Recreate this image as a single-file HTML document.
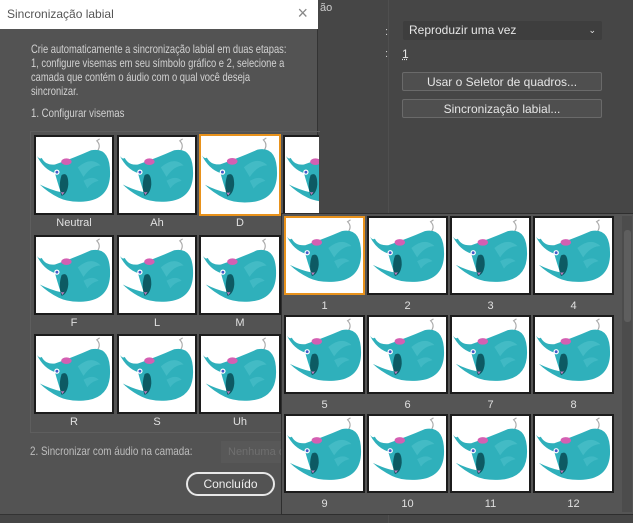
<!DOCTYPE html>
<html><head><meta charset="utf-8"><style>
*{box-sizing:border-box;margin:0;padding:0}
body{width:633px;height:523px;background:#464646;font-family:"Liberation Sans",sans-serif;font-size:11px;color:#d6d6d6;position:relative;overflow:hidden}
.abs{position:absolute}
.tile{position:absolute;background:#fff;border:2px solid #1c1c1c;overflow:hidden}
.tile.sel{border-color:#e8921c}
.tile svg{width:100%;height:100%;display:block}
.lbl{position:absolute;text-align:center;color:#e0e0e0;font-size:11px}
.btn{position:absolute;border:1px solid #6a6a6a;background:#4f4f4f;border-radius:2px;text-align:center;color:#e6e6e6;font-size:12px;line-height:18px}
.sx{transform-origin:0 0;transform:scaleX(.8);white-space:nowrap;font-size:12px}
</style></head><body>
<svg width="0" height="0" style="position:absolute">
<defs>
<g id="w">
<path d="M62 18 Q70 10 64 4 L67 2" stroke="#aaa" stroke-width="1.2" fill="none"/>
<path d="M1 20 Q4 24 6 22 Q10 30 20 29 Q40 22 58 14 Q78 10 78 38 Q78 66 50 68 Q34 69 24 64 Q12 58 4 50 Q16 56 26 58 Q22 46 20 38 Q8 34 1 20 Z" fill="#2fb0bb"/>
<path d="M44 32 Q58 20 68 30 Q58 30 50 42 Z" fill="#4cc0c9" opacity=".7"/>
<path d="M50 46 Q60 40 66 46 Q58 48 54 54 Z" fill="#4cc0c9" opacity=".6"/>
<ellipse cx="32" cy="26" rx="5.5" ry="3.5" fill="#d45fb2"/>
<path d="M27 40 Q34 36 34 50 Q33 60 27 62 Q23 52 27 40 Z" fill="#0d5a63"/>
<path d="M26 58 Q30 59 31 56 L28 61Z" fill="#c57cc0"/>
<circle cx="22" cy="37" r="2.8" fill="#fff"/><circle cx="22" cy="37" r="1.5" fill="#4658c8"/>
</g>
</defs></svg>

<div class="abs" style="left:388px;top:0;width:1px;height:523px;background:#4f4f4f"></div>
<div class="abs" style="left:320px;top:2px;color:#ccc">ão</div>
<div class="abs" style="left:385px;top:26px;color:#ccc">:</div>
<div class="abs" style="left:385px;top:48px;color:#ccc">:</div>
<div class="abs" style="left:403px;top:21px;width:199px;height:19px;background:#3e3e3e;border-radius:2px;color:#e6e6e6;font-size:12px;line-height:19px;padding-left:6px">Reproduzir uma vez<span style="position:absolute;right:6px;top:0;font-size:9px">&#8964;</span></div>
<div class="abs" style="left:402px;top:47px;color:#e6e6e6;font-size:12px;text-decoration:underline dotted">1</div>
<div class="btn" style="left:402px;top:72px;width:200px;height:19px">Usar o Seletor de quadros...</div>
<div class="btn" style="left:402px;top:99px;width:200px;height:19px">Sincronização labial...</div>

<div class="abs" style="left:0;top:0;width:318px;height:515px;background:#535353;border-right:1px solid #333;border-bottom:1px solid #333"></div>
<div class="abs" style="left:0;top:0;width:318px;height:29px;background:#fff;color:#555;font-size:12px;line-height:29px;padding-left:7px">Sincronização labial<span style="position:absolute;right:10px;top:-1px;font-size:18px;color:#888">&#215;</span></div>
<div class="abs" style="left:31px;top:42px;line-height:14px;color:#d2d2d2;font-size:12px;transform-origin:0 0;transform:scaleX(.78)">
<div style="white-space:nowrap">Crie automaticamente a sincronização labial em duas etapas:</div>
<div style="white-space:nowrap">1, configure visemas em seu símbolo gráfico e 2, selecione a</div>
<div style="white-space:nowrap">camada que contém o áudio com o qual você deseja</div>
<div style="white-space:nowrap">sincronizar.</div></div>
<div class="abs sx" style="left:31px;top:106px;color:#d2d2d2">1. Configurar visemas</div>
<div class="abs" style="left:30px;top:131px;width:290px;height:302px;border:1px solid #5e5e5e;border-right:none"></div>

<div class="tile" style="left:34px;top:135px;width:80px;height:80px"><svg viewBox="0 0 80 80"><use href="#w"/></svg></div>
<div class="tile" style="left:117px;top:135px;width:80px;height:80px"><svg viewBox="0 0 80 80"><use href="#w"/></svg></div>
<div class="tile sel" style="left:199px;top:134px;width:82px;height:82px"><svg viewBox="0 0 80 80"><use href="#w"/></svg></div>
<div class="tile" style="left:283px;top:135px;width:36px;height:80px;border-right:none"><svg viewBox="0 0 36 80" preserveAspectRatio="xMinYMid slice"><use href="#w"/></svg></div>
<div class="lbl" style="left:34px;top:217px;width:80px">Neutral</div>
<div class="lbl" style="left:117px;top:217px;width:80px">Ah</div>
<div class="lbl" style="left:199px;top:217px;width:82px">D</div>

<div class="tile" style="left:34px;top:235px;width:80px;height:80px"><svg viewBox="0 0 80 80"><use href="#w"/></svg></div>
<div class="tile" style="left:117px;top:235px;width:80px;height:80px"><svg viewBox="0 0 80 80"><use href="#w"/></svg></div>
<div class="tile" style="left:199px;top:235px;width:82px;height:80px"><svg viewBox="0 0 80 80"><use href="#w"/></svg></div>
<div class="lbl" style="left:34px;top:317px;width:80px">F</div>
<div class="lbl" style="left:117px;top:317px;width:80px">L</div>
<div class="lbl" style="left:199px;top:317px;width:82px">M</div>

<div class="tile" style="left:34px;top:334px;width:80px;height:80px"><svg viewBox="0 0 80 80"><use href="#w"/></svg></div>
<div class="tile" style="left:117px;top:334px;width:80px;height:80px"><svg viewBox="0 0 80 80"><use href="#w"/></svg></div>
<div class="tile" style="left:199px;top:334px;width:82px;height:80px"><svg viewBox="0 0 80 80"><use href="#w"/></svg></div>
<div class="lbl" style="left:34px;top:416px;width:80px">R</div>
<div class="lbl" style="left:117px;top:416px;width:80px">S</div>
<div class="lbl" style="left:199px;top:416px;width:82px">Uh</div>

<div class="abs sx" style="left:30px;top:444px;color:#bdbdbd;transform:scaleX(.82)">2. Sincronizar com áudio na camada:</div>
<div class="abs" style="left:221px;top:441px;width:70px;height:22px;background:#585858;color:#6f6f6f;line-height:22px;padding-left:7px">Nenhuma c</div>
<div class="abs" style="left:186px;top:472px;width:89px;height:24px;border:2px solid #e8e8e8;border-radius:12px;color:#eee;text-align:center;line-height:20px;font-size:12px">Concluído</div>

<div class="abs" style="left:281px;top:213px;width:352px;height:302px;background:#555;border:1px solid #2e2e2e;border-right:none"></div>
<div class="abs" style="left:622px;top:216px;width:10px;height:296px;background:#4c4c4c"></div>
<div class="abs" style="left:624px;top:230px;width:7px;height:92px;background:#5e5e5e;border-radius:3px"></div>
<div id="pop"></div>
<script>
var h='',n=1,xs=[284,367,450,533],ys=[216,315,414];
for(var r=0;r<3;r++)for(var c=0;c<4;c++){
var s=(n==1)?' sel':'';
h+='<div class="tile'+s+'" style="left:'+xs[c]+'px;top:'+ys[r]+'px;width:81px;height:79px"><svg viewBox="0 0 80 80" preserveAspectRatio="none"><use href="#w"/></svg></div>';
h+='<div class="lbl" style="left:'+xs[c]+'px;top:'+(ys[r]+84)+'px;width:81px">'+n+'</div>';n++;}
document.getElementById('pop').innerHTML=h;
</script>
</body></html>
